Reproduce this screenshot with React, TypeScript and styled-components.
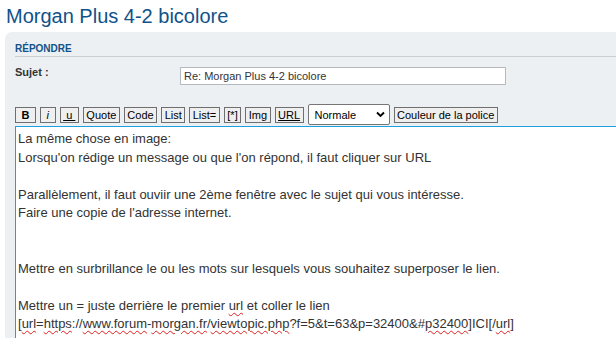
import styled, { createGlobalStyle } from "styled-components";

const GlobalStyle = createGlobalStyle`
  html, body {
    margin: 0;
    padding: 0;
    background: #ffffff;
    overflow: hidden;
  }
  body {
    font-family: "Liberation Sans", Arial, sans-serif;
    color: #333333;
  }
`;

const Page = styled.div`
  width: 616px;
  height: 338px;
  overflow: hidden;
`;

const Title = styled.h2`
  margin: 0;
  padding: 5px 0 0 6px;
  height: 32px;
  box-sizing: border-box;
  font-size: 20px;
  line-height: 23px;
  font-weight: normal;
  color: #105289;
  white-space: nowrap;
`;

const Panel = styled.div`
  margin-left: 5px;
  width: 660px;
  background: #ecf0f3;
  border-radius: 7px 0 0 0;
  padding: 11px 10px 0 10px;
  box-sizing: border-box;
  height: 320px;
`;

const PanelHeader = styled.h3`
  margin: 0;
  padding: 0 0 1px 0;
  font-size: 10px;
  line-height: 12px;
  font-weight: bold;
  text-transform: uppercase;
  color: #105289;
  border-bottom: 1px solid #cccccc;
`;

const FieldRow = styled.div`
  display: flex;
  align-items: flex-start;
  margin-top: 10px;
`;

const Label = styled.label`
  width: 165px;
  font-size: 11px;
  line-height: 11px;
  font-weight: bold;
  color: #333333;
`;

const SubjectInput = styled.input`
  width: 326px;
  height: 18px;
  box-sizing: border-box;
  border: 1px solid #b4bac0;
  background: #ffffff;
  padding: 0 3px;
  font-family: "Liberation Sans", Arial, sans-serif;
  font-size: 11px;
  color: #333333;
  outline: none;
`;

const Toolbar = styled.div`
  display: flex;
  align-items: center;
  gap: 4px;
  margin-top: 19px;
  height: 21px;
`;

const TagButton = styled.button<{ $bold?: boolean; $italic?: boolean; $underline?: boolean }>`
  height: 16px;
  box-sizing: border-box;
  padding: 0 2.5px;
  margin: 0;
  background: #efefef;
  border: 1px solid #6f6f6f;
  border-radius: 0;
  font-family: "Liberation Sans", Arial, sans-serif;
  font-size: 11px;
  line-height: 14px;
  color: #000000;
  font-weight: ${(p) => (p.$bold ? "bold" : "normal")};
  font-style: ${(p) => (p.$italic ? "italic" : "normal")};
  text-decoration: ${(p) => (p.$underline ? "underline" : "none")};
  white-space: nowrap;
  cursor: pointer;
`;

const SizeSelect = styled.div`
  width: 82px;
  height: 21px;
  box-sizing: border-box;
  border: 1px solid #767676;
  border-radius: 2px;
  background: #ffffff;
  display: flex;
  align-items: center;
  justify-content: space-between;
  padding: 0 4px 0 6px;
  font-size: 11px;
  color: #000000;
`;

const Editor = styled.div`
  margin-top: 1px;
  border: 1px solid #1ba1e2;
  border-right: none;
  background: #ffffff;
  padding: 3px 2px;
  font-size: 13px;
  line-height: 18.5px;
  color: #333333;
  height: 260px;
`;

const Line = styled.div`
  white-space: pre;
  min-height: 18.5px;
`;

const Typo = styled.span`
  text-decoration: underline wavy #e02020;
  text-decoration-thickness: 1px;
  text-underline-offset: 2px;
`;

function App() {
  return (
    <Page>
      <GlobalStyle />
      <Title>Morgan Plus 4-2 bicolore</Title>
      <Panel>
        <PanelHeader>Répondre</PanelHeader>
        <FieldRow>
          <Label>Sujet :</Label>
          <SubjectInput readOnly value="Re: Morgan Plus 4-2 bicolore" />
        </FieldRow>
        <Toolbar>
          <TagButton $bold>&nbsp;B&nbsp;</TagButton>
          <TagButton $italic>&nbsp;i&nbsp;</TagButton>
          <TagButton $underline>&nbsp;u&nbsp;</TagButton>
          <TagButton>Quote</TagButton>
          <TagButton>Code</TagButton>
          <TagButton>List</TagButton>
          <TagButton>List=</TagButton>
          <TagButton>[*]</TagButton>
          <TagButton>Img</TagButton>
          <TagButton $underline>URL</TagButton>
          <SizeSelect>
            <span>Normale</span>
            <svg width="9" height="7" viewBox="0 0 9 7">
              <path d="M1 1.5 L4.5 5 L8 1.5" fill="none" stroke="#000" strokeWidth="1.9" />
            </svg>
          </SizeSelect>
          <TagButton>Couleur de la police</TagButton>
        </Toolbar>
        <Editor>
          <Line>La même chose en image:</Line>
          <Line>Lorsqu'on rédige un message ou que l'on répond, il faut cliquer sur URL</Line>
          <Line> </Line>
          <Line>Parallèlement, il faut ouviir une 2ème fenêtre avec le sujet qui vous intéresse.</Line>
          <Line>Faire une copie de l'adresse internet.</Line>
          <Line> </Line>
          <Line> </Line>
          <Line>Mettre en surbrillance le ou les mots sur lesquels vous souhaitez superposer le lien.</Line>
          <Line> </Line>
          <Line>
            Mettre un = juste derrière le premier <Typo>url</Typo> et coller le lien
          </Line>
          <Line>
            [<Typo>url</Typo>=<Typo>https</Typo>://<Typo>www.forum</Typo>-<Typo>morgan.fr</Typo>/
            <Typo>viewtopic.php</Typo>?f=5&amp;t=63&amp;p=32400&amp;#<Typo>p32400</Typo>]ICI[/<Typo>url</Typo>]
          </Line>
        </Editor>
      </Panel>
    </Page>
  );
}

export default App;
